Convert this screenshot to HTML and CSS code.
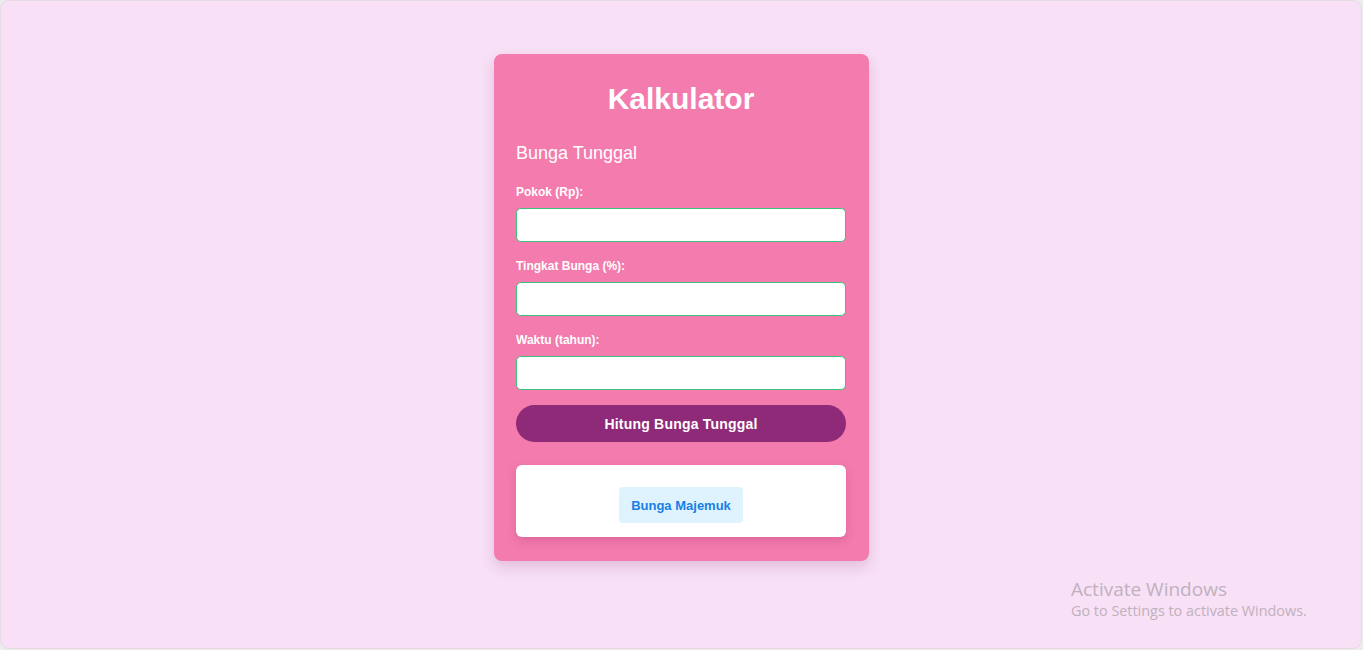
FILE: index.html
```html
<!DOCTYPE html>
<html lang="id">
<head>
<meta charset="utf-8">
<title>Kalkulator</title>
<link rel="stylesheet" href="styles.css">
</head>
<body>
<div class="frame">
  <div class="card">
    <h1 class="title">Kalkulator</h1>
    <h2 class="subtitle">Bunga Tunggal</h2>
    <form class="form">
      <label class="label" for="pokok">Pokok (Rp):</label>
      <input class="input" id="pokok" type="number">
      <label class="label" for="bunga">Tingkat Bunga (%):</label>
      <input class="input" id="bunga" type="number">
      <label class="label" for="waktu">Waktu (tahun):</label>
      <input class="input input-last" id="waktu" type="number">
      <button class="btn-main" type="button">Hitung Bunga Tunggal</button>
    </form>
    <div class="result">
      <button class="btn-link" type="button">Bunga Majemuk</button>
    </div>
  </div>
  <div class="watermark">
    <div class="wm-title">Activate Windows</div>
    <div class="wm-sub">Go to Settings to activate Windows.</div>
  </div>
</div>
</body>
</html>
```
FILE: styles.css
```css
html, body {
  margin: 0;
  padding: 0;
  height: 100%;
}
body {
  background: #ececec;
  font-family: "Liberation Sans", Arial, sans-serif;
}
.frame {
  position: relative;
  box-sizing: border-box;
  height: 649px;
  width: 1362px;
  background: #f8e0f6;
  border: 1px solid #e6dbe4;
  border-radius: 9px;
  display: flex;
  justify-content: center;
  align-items: flex-start;
  padding-top: 53px;
}
.card {
  box-sizing: border-box;
  width: 375px;
  background: #f37bad;
  border-radius: 8px;
  padding: 28px 23px 24px 22px;
  box-shadow: 0 6px 14px rgba(120, 40, 90, 0.18);
  margin-left: 1px;
}
.title {
  margin: 0;
  font-size: 30px;
  line-height: 34px;
  font-weight: bold;
  color: #ffffff;
  text-align: center;
}
.subtitle {
  margin: 27px 0 21px;
  font-size: 18px;
  line-height: 21px;
  font-weight: normal;
  color: #ffffff;
}
.form {
  display: flex;
  flex-direction: column;
  margin: 0;
}
.label {
  font-size: 12px;
  line-height: 14px;
  font-weight: bold;
  color: #ffffff;
  margin-bottom: 9px;
}
.input {
  box-sizing: border-box;
  height: 34px;
  width: 100%;
  border: 1px solid #3ec47a;
  border-radius: 5px;
  background: #ffffff;
  margin: 0 0 17px;
  padding: 0 8px;
  font-size: 14px;
}
.input-last {
  margin-bottom: 15px;
}
.btn-main {
  height: 37px;
  border: none;
  border-radius: 19px;
  background: #8e2a78;
  color: #ffffff;
  font-family: "Liberation Sans", Arial, sans-serif;
  font-size: 14px;
  font-weight: bold;
  letter-spacing: 0.2px;
  cursor: pointer;
}
.result {
  margin-top: 23px;
  background: #ffffff;
  border-radius: 6px;
  height: 72px;
  box-sizing: border-box;
  padding-top: 22px;
  display: flex;
  justify-content: center;
  align-items: flex-start;
  box-shadow: 0 4px 10px rgba(150, 40, 90, 0.22);
}
.btn-link {
  height: 36px;
  padding: 0 12px;
  border: none;
  border-radius: 4px;
  background: #def3fd;
  color: #1a7ee6;
  font-family: "Liberation Sans", Arial, sans-serif;
  font-size: 13px;
  font-weight: bold;
  cursor: pointer;
}
.watermark {
  position: absolute;
  left: 1070px;
  top: 576px;
  font-family: "Open Sans", "Noto Sans", sans-serif;
  color: #bfb1bd;
}
.wm-title {
  font-size: 19px;
  line-height: 24px;
}
.wm-sub {
  font-size: 14.4px;
  line-height: 20px;
}
```
